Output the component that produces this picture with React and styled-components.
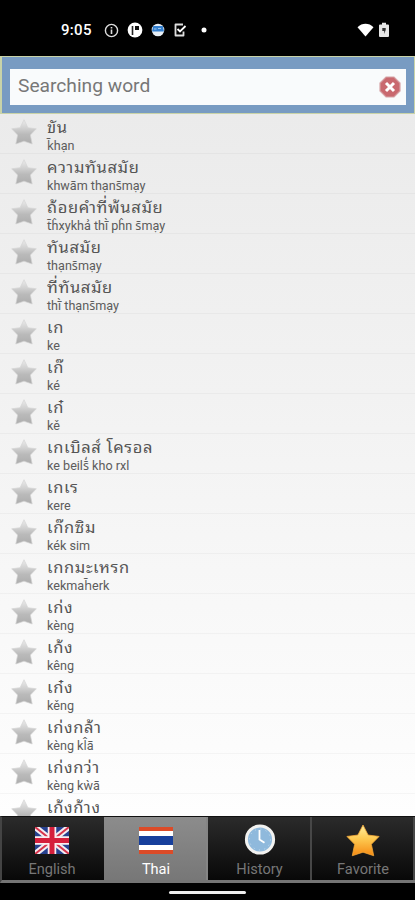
import React from "react";
import styled, { createGlobalStyle } from "styled-components";

const Global = createGlobalStyle`
  * { box-sizing: border-box; }
  body { margin: 0; background: #000; }
`;

const Screen = styled.div`
  width: 415px;
  height: 900px;
  overflow: hidden;
  display: flex;
  flex-direction: column;
  background: #000;
  font-family: Roboto, "Noto Sans", sans-serif;
`;

const StatusBar = styled.header`
  height: 56px;
  flex: none;
  display: flex;
  align-items: center;
  padding: 4px 26px 0 61px;
  color: #fff;
`;

const Clock = styled.span`
  width: 43px;
  font: 500 15px/20px Roboto, sans-serif;
  letter-spacing: 0.3px;
`;

const Notifications = styled.div`
  display: flex;
  align-items: center;
  gap: 8px;
  flex: 1;
`;

const Indicators = styled.div`
  display: flex;
  align-items: center;
  gap: 5px;
`;

const SearchBar = styled.div`
  height: 58px;
  flex: none;
  padding: 12px 8px 8px 8px;
  background: #789bc2;
  border: 1px solid #c9d3a8;
  border-width: 1px 1px 1px 2px;
  display: flex;
`;

const Field = styled.div`
  flex: 1;
  height: 36px;
  display: flex;
  align-items: center;
  justify-content: space-between;
  padding: 0 5px 0 8px;
  background: #f9fbfc;
  color: #777;
  font-size: 19.2px;
  line-height: 22px;
`;

const Placeholder = styled.span`
  padding-bottom: 3px;
`;

const List = styled.main`
  flex: 1;
  min-height: 0;
  overflow: hidden;
  background: linear-gradient(#ebebeb, #f2f2f2 40%, #fefefe);
`;

const Row = styled.div`
  height: 40px;
  display: flex;
  padding-left: 11px;
  border-bottom: 1px solid rgba(0, 0, 0, 0.03);
`;

const StarBox = styled.div`
  width: 36px;
  padding-top: 5px;
`;

const Words = styled.div`
  display: flex;
  flex-direction: column;
  padding-top: 2px;
  white-space: nowrap;
`;

const Thai = styled.span`
  height: 21px;
  font-family: "Noto Sans Thai Looped", "Noto Looped Thai", Loma, Waree, Garuda, Roboto, sans-serif;
  font-size: 16.5px;
  letter-spacing: 0.65px;
  line-height: 20px;
  color: #555;
`;

const Roman = styled.span`
  height: 16px;
  font-size: 12.6px;
  line-height: 18px;
  color: #5c5c5c;
`;

const Tabs = styled.nav`
  height: 67px;
  flex: none;
  display: grid;
  grid-template-columns: 102px 104px 104px 103px;
  border-top: 1px solid #111;
  border-bottom: 3px solid #747474;
  border-left: 2px solid #444;
  background: #111;
`;

const Tab = styled.div`
  display: flex;
  flex-direction: column;
  align-items: center;
  padding-top: 4px;
  padding-left: ${(p) => (p.$active ? "2px" : "0")};
  border-right: 2px solid ${(p) => (p.$active ? "#858585" : "#474747")};
  &:first-child { border-right: 0; padding-right: 2px; }
  &:nth-child(n + 3) { padding-left: 1px; }
  background: ${(p) => (p.$active ? "linear-gradient(#8c8c8c, #777)" : "linear-gradient(#2b2b2b, #080808)")};
  color: ${(p) => (p.$active ? "#fff" : "#777")};
  font-size: 14.6px;
  line-height: 18px;
`;

const TabIcon = styled.div`
  height: 39px;
  display: flex;
  align-items: center;
  justify-content: center;
`;

const HomeArea = styled.footer`
  height: 17px;
  flex: none;
  display: flex;
  justify-content: center;
  padding-top: 8px;
`;

const HomePill = styled.div`
  width: 77px;
  height: 3px;
  border-radius: 2px;
  background: #eee;
`;

const entries = [
  ["ขัน", "k̄hạn"],
  ["ความทันสมัย", "khwām thạns̄mạy"],
  ["ถ้อยคำที่พ้นสมัย", "t̄ĥxykhả thī̀ pĥn s̄mạy"],
  ["ทันสมัย", "thạns̄mạy"],
  ["ที่ทันสมัย", "thī̀ thạns̄mạy"],
  ["เก", "ke"],
  ["เก๊", "ké"],
  ["เก๋", "kě"],
  ["เกเบิลส์ โครอล", "ke beils̄̒ kho rxl"],
  ["เกเร", "kere"],
  ["เก๊กซิม", "kék sim"],
  ["เกกมะเหรก", "kekmah̄erk"],
  ["เก่ง", "kèng"],
  ["เก้ง", "kêng"],
  ["เก๋ง", "kěng"],
  ["เก่งกล้า", "kèng kl̂ā"],
  ["เก่งกว่า", "kèng kẁā"],
  ["เก้งก้าง", ""],
];

const starPath = "M13 .8 L16.9 8.7 L25.3 9.8 L19.4 16 L21.2 25 L13 22.2 L4.8 25 L6.6 16 L.7 9.8 L9.1 8.7Z";

const GreyStar = () => (
  <svg width="26" height="26" viewBox="0 0 26 26">
    <defs>
      <linearGradient id="grey" x2="0" y2="1">
        <stop offset="0" stopColor="#ececec" />
        <stop offset=".35" stopColor="#d0d0d0" />
        <stop offset=".6" stopColor="#bababa" />
        <stop offset="1" stopColor="#adadad" />
      </linearGradient>
    </defs>
    <path d={starPath} fill="url(#grey)" stroke="#d4d4d4" strokeWidth=".7" strokeLinejoin="round" />
  </svg>
);

const GoldStar = () => (
  <svg width="34" height="33" viewBox="0 0 26 26" preserveAspectRatio="none">
    <defs>
      <linearGradient id="gold" x2="0" y2="1">
        <stop offset="0" stopColor="#fff0a0" />
        <stop offset=".45" stopColor="#fdc950" />
        <stop offset="1" stopColor="#f58a13" />
      </linearGradient>
    </defs>
    <path d={starPath} fill="url(#gold)" stroke="#f4a838" strokeWidth=".6" strokeLinejoin="round" />
  </svg>
);

const UkFlag = () => (
  <svg width="34" height="27" viewBox="0 0 34 27">
    <path fill="#27418f" d="M0 0h34v27H0z" />
    <path d="M0 0l34 27M34 0L0 27" stroke="#f3eef2" strokeWidth="6" />
    <path d="M0 0l34 27M34 0L0 27" stroke="#d8344c" strokeWidth="2" />
    <path d="M17 0v27M0 13.5h34" stroke="#fbeef0" strokeWidth="8.5" />
    <path d="M17 0v27M0 13.5h34" stroke="#d51f3c" strokeWidth="5" />
  </svg>
);

const ThaiFlag = () => (
  <svg width="34" height="27" viewBox="0 0 34 27">
    <path fill="#dc4b28" d="M0 0h34v27H0z" />
    <path fill="#fff" d="M0 4h34v19H0z" />
    <path fill="#173f9c" d="M0 9h34v9H0z" />
  </svg>
);

const HistoryClock = () => (
  <svg width="32" height="36" viewBox="0 0 32 36">
    <circle cx="16" cy="16.500" r="13.6" fill="#8fb9dc" stroke="#f2f2f0" strokeWidth="3" />
    <circle cx="16" cy="16.500" r="10.5" fill="none" stroke="#c6deef" strokeWidth="1" strokeDasharray="1 4.5" />
    <path d="M15.5 7V16.500l5 3.3" fill="none" stroke="#fff" strokeWidth="1.8" />
  </svg>
);

const ClearIcon = () => (
  <svg width="22" height="22" viewBox="0 0 22 22">
    <path d="M7 1h8l6 6v8l-6 6H7l-6-6V7z" fill="#c9696f" stroke="#d6a3a6" strokeWidth="1.2" />
    <path d="M7 7l8 8M15 7l-8 8" stroke="#fff" strokeWidth="3" />
  </svg>
);

const InfoIcon = () => (
  <svg width="15" height="15" viewBox="0 0 15 15">
    <circle cx="7.5" cy="7.5" r="6.1" fill="none" stroke="#ddd" strokeWidth="1.4" />
    <path d="M7.5 4v1.6M7.5 6.6V11" stroke="#ddd" strokeWidth="1.6" />
  </svg>
);

const PIcon = () => (
  <svg width="16" height="16" viewBox="0 0 16 16">
    <circle cx="8" cy="8" r="7.4" fill="#fff" />
    <path d="M5.5 4v9" stroke="#222" strokeWidth="1.6" />
    <path d="M8 4h4v4H8z" fill="#111" />
  </svg>
);

const BlueIcon = () => (
  <svg width="14" height="14" viewBox="0 0 14 14">
    <circle cx="7" cy="7" r="6.3" fill="#e8eff6" />
    <path d="M2.2 3h9.6L13 8.500H1z" fill="#337fce" />
    <path d="M3 6h2.5M7 5.5h3" stroke="#9fc8ef" />
  </svg>
);

const TaskIcon = () => (
  <svg width="14" height="16" viewBox="0 0 14 16">
    <path d="M10 2.500H2.500v11H10.500V9.500" fill="none" stroke="#ddd" strokeWidth="1.8" strokeLinejoin="round" />
    <path d="M4.5 7l2.500 2.500 5.500-5.500" fill="none" stroke="#fff" strokeWidth="1.8" />
  </svg>
);

const DotIcon = () => (
  <svg width="18" height="6" viewBox="0 0 18 6">
    <circle cx="9" cy="3" r="2.5" fill="#fff" />
  </svg>
);

const WifiIcon = () => (
  <svg width="17" height="14" viewBox="0 0 17 14">
    <path d="M.5 4.2C5-.4 12-.4 16.5 4.2L8.5 13.5z" fill="#fff" />
  </svg>
);

const BatteryIcon = () => (
  <svg width="10" height="16" viewBox="0 0 10 16">
    <path d="M3 .8h4v1.7h2q1 0 1 1V14q0 1-1 1H1q-1 0-1-1V3.500q0-1 1-1h2z" fill="#e6e6e6" />
    <path d="M3.3 6h3.4v2L5.2 12V9H3.300z" fill="#333" />
  </svg>
);

const tabs = [
  ["English", UkFlag],
  ["Thai", ThaiFlag],
  ["History", HistoryClock],
  ["Favorite", GoldStar],
];

export default function App() {
  return (
    <Screen>
      <Global />
      <StatusBar>
        <Clock>9:05</Clock>
        <Notifications>
          <InfoIcon />
          <PIcon />
          <BlueIcon />
          <TaskIcon />
          <DotIcon />
        </Notifications>
        <Indicators>
          <WifiIcon />
          <BatteryIcon />
        </Indicators>
      </StatusBar>
      <SearchBar>
        <Field>
          <Placeholder>Searching word</Placeholder>
          <ClearIcon />
        </Field>
      </SearchBar>
      <List>
        {entries.map(([thai, roman]) => (
          <Row key={thai}>
            <StarBox><GreyStar /></StarBox>
            <Words>
              <Thai lang="th">{thai}</Thai>
              {roman && <Roman>{roman}</Roman>}
            </Words>
          </Row>
        ))}
      </List>
      <Tabs>
        {tabs.map(([label, Icon]) => (
          <Tab key={label} $active={label === "Thai"}>
            <TabIcon><Icon /></TabIcon>
            {label}
          </Tab>
        ))}
      </Tabs>
      <HomeArea><HomePill /></HomeArea>
    </Screen>
  );
}
